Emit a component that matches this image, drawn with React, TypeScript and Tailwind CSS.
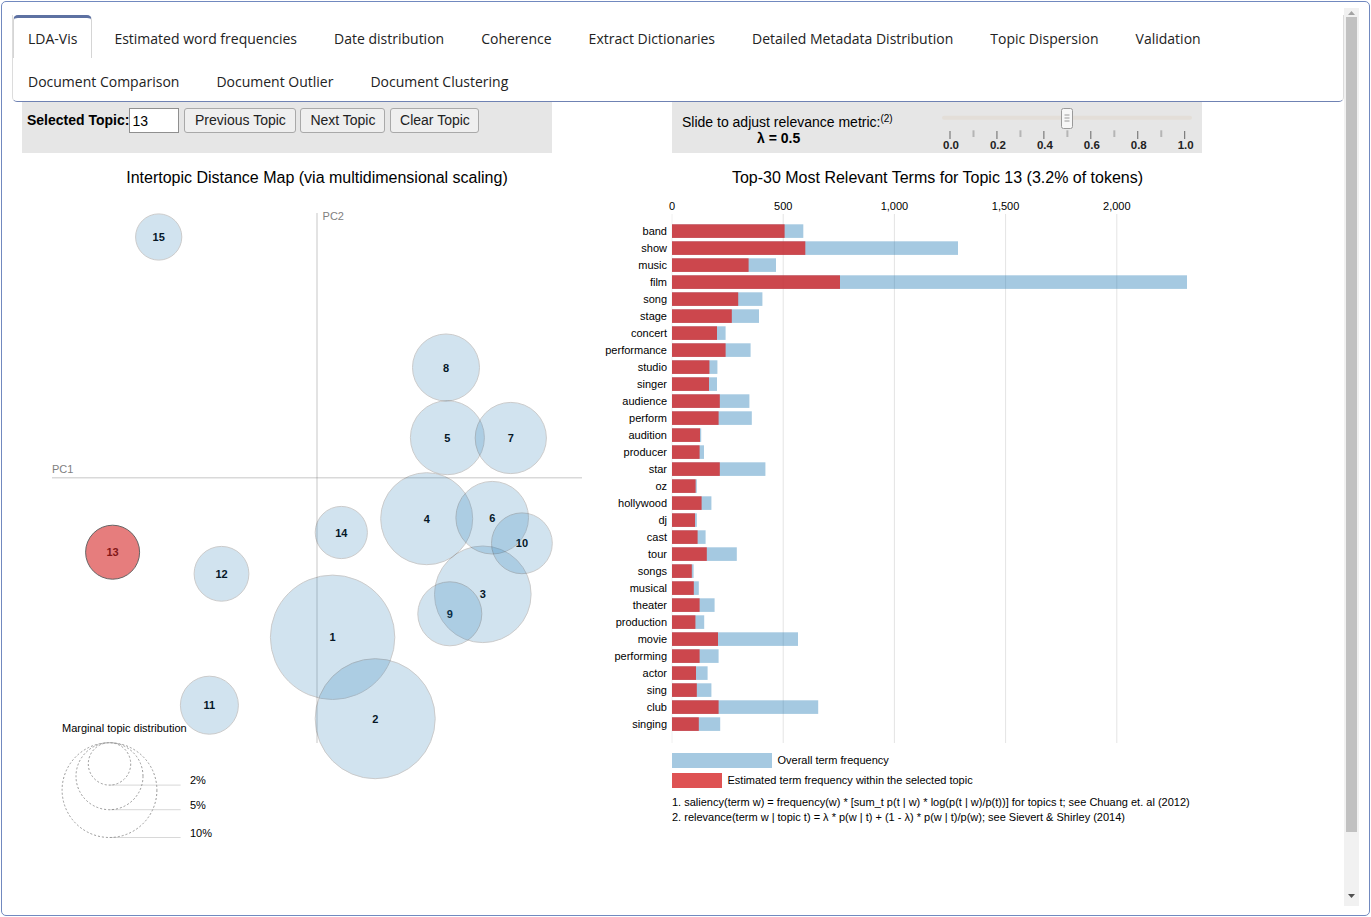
import React from 'react';

const TABS = [
  'LDA-Vis',
  'Estimated word frequencies',
  'Date distribution',
  'Coherence',
  'Extract Dictionaries',
  'Detailed Metadata Distribution',
  'Topic Dispersion',
  'Validation',
  'Document Comparison',
  'Document Outlier',
  'Document Clustering',
];

// page coordinates: centre x, centre y, radius
const TOPICS = [
  { id: 1, x: 332.6, y: 636.3, r: 62.2 },
  { id: 2, x: 375.2, y: 717.7, r: 60 },
  { id: 3, x: 482.8, y: 593.3, r: 48.3 },
  { id: 4, x: 426.7, y: 517.7, r: 46 },
  { id: 5, x: 447.4, y: 436.7, r: 37 },
  { id: 6, x: 492.2, y: 516.7, r: 36.3 },
  { id: 7, x: 510.8, y: 437, r: 35.6 },
  { id: 8, x: 446, y: 366.5, r: 33.5 },
  { id: 9, x: 449.8, y: 612.8, r: 32 },
  { id: 10, x: 521.9, y: 542.3, r: 30.4 },
  { id: 11, x: 209.4, y: 704.2, r: 29 },
  { id: 12, x: 221.5, y: 572.8, r: 27.4 },
  { id: 13, x: 112.6, y: 551.2, r: 27 },
  { id: 14, x: 341.3, y: 531.5, r: 26.1 },
  { id: 15, x: 158.7, y: 236, r: 23.1 },
];

const SELECTED = 13;

// term, end of topic bar, end of overall bar (page x)
const TERMS: [string, number, number][] = [
  ['band', 784.6, 803.3],
  ['show', 805.3, 958],
  ['music', 748.6, 776],
  ['film', 840, 1187],
  ['song', 738.2, 762.4],
  ['stage', 731.8, 759],
  ['concert', 717, 725.6],
  ['performance', 725.6, 750.6],
  ['studio', 709.4, 717.4],
  ['singer', 709, 717],
  ['audience', 719.8, 749.4],
  ['perform', 718.6, 751.8],
  ['audition', 700, 701.2],
  ['producer', 699.6, 704],
  ['star', 719.8, 765.4],
  ['oz', 695.6, 696.8],
  ['hollywood', 701.6, 711.4],
  ['dj', 695, 696.8],
  ['cast', 697.6, 705.6],
  ['tour', 706.8, 736.8],
  ['songs', 691.8, 693.6],
  ['musical', 693.8, 698.8],
  ['theater', 699.6, 714.6],
  ['production', 695.4, 704.2],
  ['movie', 718, 798],
  ['performing', 699.6, 718.6],
  ['actor', 696, 707.6],
  ['sing', 696.8, 711.4],
  ['club', 718.6, 818.2],
  ['singing', 698.8, 720.2],
];

const X0 = 672;
const STEP = 111.2; // px per 500 tokens

function Tabs() {
  return (
    <div className="border-x border-x-[#dcdcdc] border-b border-b-[#6f82b3] rounded-b-[5px] flex flex-wrap gap-x-[7px] font-['Open_Sans',sans-serif] text-[14px] text-[#222]">
      {TABS.map((t, i) => (
        <div
          key={t}
          className={
            i === 0
              ? 'h-[43px] px-[14px] pt-[2px] flex items-center border-x border-t-[3px] border-x-[#d5d5d5] border-t-[#5d71a2] rounded-t-[5px]'
              : 'h-[43px] px-[14px] pt-[2px] flex items-center border-x border-t-[3px] border-transparent'
          }
        >
          <span className="leading-5">{t}</span>
        </div>
      ))}
    </div>
  );
}

function Slider() {
  const majors = [0, 1, 2, 3, 4, 5].map((k) => 950 + 46.94 * k);
  const minors = [0, 1, 2, 3, 4].map((k) => 973.5 + 46.94 * k);
  return (
    <svg width={270} height={51} viewBox="932 101 270 51" className="shrink-0">
      <rect x={942} y={114.7} width={250} height={4} rx={2} fill="#e3ded8" />
      {minors.map((x) => (
        <line key={x} x1={x} x2={x} y1={129.3} y2={136} stroke="#b5b5b5" strokeWidth={2} />
      ))}
      {majors.map((x, k) => (
        <g key={x}>
          <line x1={x} x2={x} y1={130} y2={138} stroke="#666" strokeWidth={1} />
          <text x={x + 1} y={147.5} textAnchor="middle" fontSize={11.5} fontWeight="bold" fill="#222">
            {(k * 0.2).toFixed(1)}
          </text>
        </g>
      ))}
      <rect x={1061.5} y={107.5} width={11} height={20} rx={2} fill="#f7f7f7" stroke="#9a9a9a" />
      {[114, 117, 120].map((y) => (
        <line key={y} x1={1064.5} x2={1069.5} y1={y} y2={y} stroke="#9a9a9a" strokeWidth={1} />
      ))}
    </svg>
  );
}

function Controls() {
  return (
    <div className="flex gap-[120px] pl-[10px]">
      <div className="w-[530px] h-[51px] bg-[#e6e6e6] flex items-start pt-[6px] pl-[5px] text-[14px]">
        <span className="font-bold leading-[25px]">Selected Topic:</span>
        <input
          readOnly
          value="13"
          className="w-[50px] h-[25px] border border-[#8f8f8f] bg-white px-[2px] text-[14px] outline-none"
        />
        <button className="ml-[5px] w-[112px] h-[25px] border border-[#a9a9a9] bg-[#efefef] rounded-[3px] text-[14px] text-[#222]">
          Previous Topic
        </button>
        <button className="ml-[4px] w-[85px] h-[25px] border border-[#a9a9a9] bg-[#efefef] rounded-[3px] text-[14px] text-[#222]">
          Next Topic
        </button>
        <button className="ml-[5px] w-[89px] h-[25px] border border-[#a9a9a9] bg-[#efefef] rounded-[3px] text-[14px] text-[#222]">
          Clear Topic
        </button>
      </div>
      <div className="w-[530px] h-[51px] bg-[#e6e6e6] flex pl-[10px]">
        <div className="w-[250px] pt-[12px] text-[14px] leading-4">
          <div>
            Slide to adjust relevance metric:<sup className="text-[10px]">(2)</sup>
          </div>
          <div className="pl-[75px] font-bold">λ = 0.5</div>
        </div>
        <Slider />
      </div>
    </div>
  );
}

function MdsChart() {
  const guides = [
    { r: 21.2, label: '2%' },
    { r: 33.5, label: '5%' },
    { r: 47.4, label: '10%' },
  ];
  const cx = 109.5;
  const top = 741.7;
  return (
    <svg width={590} height={700} viewBox="12 152 590 700" className="shrink-0">
      <text x={317} y={181.5} textAnchor="middle" fontSize={16}>
        Intertopic Distance Map (via multidimensional scaling)
      </text>
      <line x1={317} x2={317} y1={212} y2={742} stroke="gray" strokeOpacity={0.3} strokeWidth={1.5} />
      <line x1={52} x2={582} y1={476.7} y2={476.7} stroke="gray" strokeOpacity={0.3} strokeWidth={1.5} />
      <text x={322.6} y={219} fontSize={11} fill="gray">PC2</text>
      <text x={52} y={472} fontSize={11} fill="gray">PC1</text>

      {TOPICS.map((t) => (
        <text key={`l${t.id}`} x={t.x} y={t.y + 4} textAnchor="middle" fontSize={11} fontWeight="bold">
          {t.id}
        </text>
      ))}
      {TOPICS.map((t) => (
        <circle
          key={`c${t.id}`}
          cx={t.x}
          cy={t.y}
          r={t.r}
          fill={t.id === SELECTED ? '#d62728' : '#1f77b4'}
          stroke="black"
          opacity={t.id === SELECTED ? 0.6 : 0.2}
        />
      ))}

      <text x={62} y={731} fontSize={11}>Marginal topic distribution</text>
      {guides.map((g) => (
        <g key={g.label}>
          <circle cx={cx} cy={top + g.r} r={g.r} fill="none" stroke="#999" strokeDasharray="2 2" />
          <line
            x1={cx}
            x2={cx + 1.5 * 47.4}
            y1={top + 2 * g.r}
            y2={top + 2 * g.r}
            stroke="gray"
            opacity={0.3}
          />
          <text x={190} y={top + 2 * g.r - 1} fontSize={11}>
            {g.label}
          </text>
        </g>
      ))}
    </svg>
  );
}

function BarChart() {
  const ticks = ['0', '500', '1,000', '1,500', '2,000'];
  return (
    <svg width={741} height={700} viewBox="602 152 741 700" className="shrink-0">
      <text x={937.5} y={181.5} textAnchor="middle" fontSize={16}>
        Top-30 Most Relevant Terms for Topic 13 (3.2% of tokens)
      </text>
      {ticks.map((t, k) => (
        <g key={t}>
          <line
            x1={X0 + STEP * k}
            x2={X0 + STEP * k}
            y1={213}
            y2={742}
            stroke={k === 0 ? '#f0f0f0' : '#e4e4e4'}
            strokeWidth={1}
          />
          <text x={X0 + STEP * k} y={208.5} textAnchor="middle" fontSize={11}>
            {t}
          </text>
        </g>
      ))}
      {TERMS.map(([term, red, blue], i) => {
        const y = 223.3 + 17 * i;
        return (
          <g key={term}>
            <text x={667} y={y + 10.8} textAnchor="end" fontSize={11}>
              {term}
            </text>
            <rect x={X0} y={y} width={blue - X0} height={13.6} fill="#1f77b4" opacity={0.4} />
            <rect x={X0} y={y} width={red - X0} height={13.6} fill="#d62728" opacity={0.8} />
          </g>
        );
      })}

      <rect x={672} y={752} width={100} height={15} fill="#1f77b4" opacity={0.4} />
      <text x={777.5} y={763} fontSize={11}>Overall term frequency</text>
      <rect x={672} y={772} width={50} height={15} fill="#d62728" opacity={0.8} />
      <text x={727.5} y={783} fontSize={11}>Estimated term frequency within the selected topic</text>
      <text x={672} y={805} fontSize={11}>
        1. saliency(term w) = frequency(w) * [sum_t p(t | w) * log(p(t | w)/p(t))] for topics t; see Chuang et. al (2012)
      </text>
      <text x={672} y={820} fontSize={11}>
        2. relevance(term w | topic t) = λ * p(w | t) + (1 - λ) * p(w | t)/p(w); see Sievert &amp; Shirley (2014)
      </text>
    </svg>
  );
}

function Scrollbar() {
  return (
    <div className="w-[15px] shrink-0 bg-[#f1f1f1] flex flex-col items-center">
      <div className="h-[9px] pt-[3px] flex justify-center">
        <svg width="7" height="4" viewBox="0 0 7 4">
          <path d="M0 4 L3.5 0 L7 4 Z" fill="#a3a3a3" />
        </svg>
      </div>
      <div className="w-[11px] h-[815px] bg-[#c1c1c1]" />
      <div className="flex-1" />
      <div className="h-[14px] pb-[8px] flex items-end justify-center">
        <svg width="7" height="4" viewBox="0 0 7 4">
          <path d="M0 0 L7 0 L3.5 4 Z" fill="#505050" />
        </svg>
      </div>
    </div>
  );
}

export default function App() {
  return (
    <div className="w-[1371px] h-[917px] bg-white p-px font-['Liberation_Sans',Arial,sans-serif] text-black">
      <div className="h-full border border-[#7189bf] rounded-[5px] flex pt-[6px] pr-[10px] pb-[9px]">
        <div className="flex-1 min-w-0 pl-[10px] pt-[7px] overflow-hidden">
          <Tabs />
          <Controls />
          <div className="flex">
            <MdsChart />
            <BarChart />
          </div>
        </div>
        <Scrollbar />
      </div>
    </div>
  );
}
